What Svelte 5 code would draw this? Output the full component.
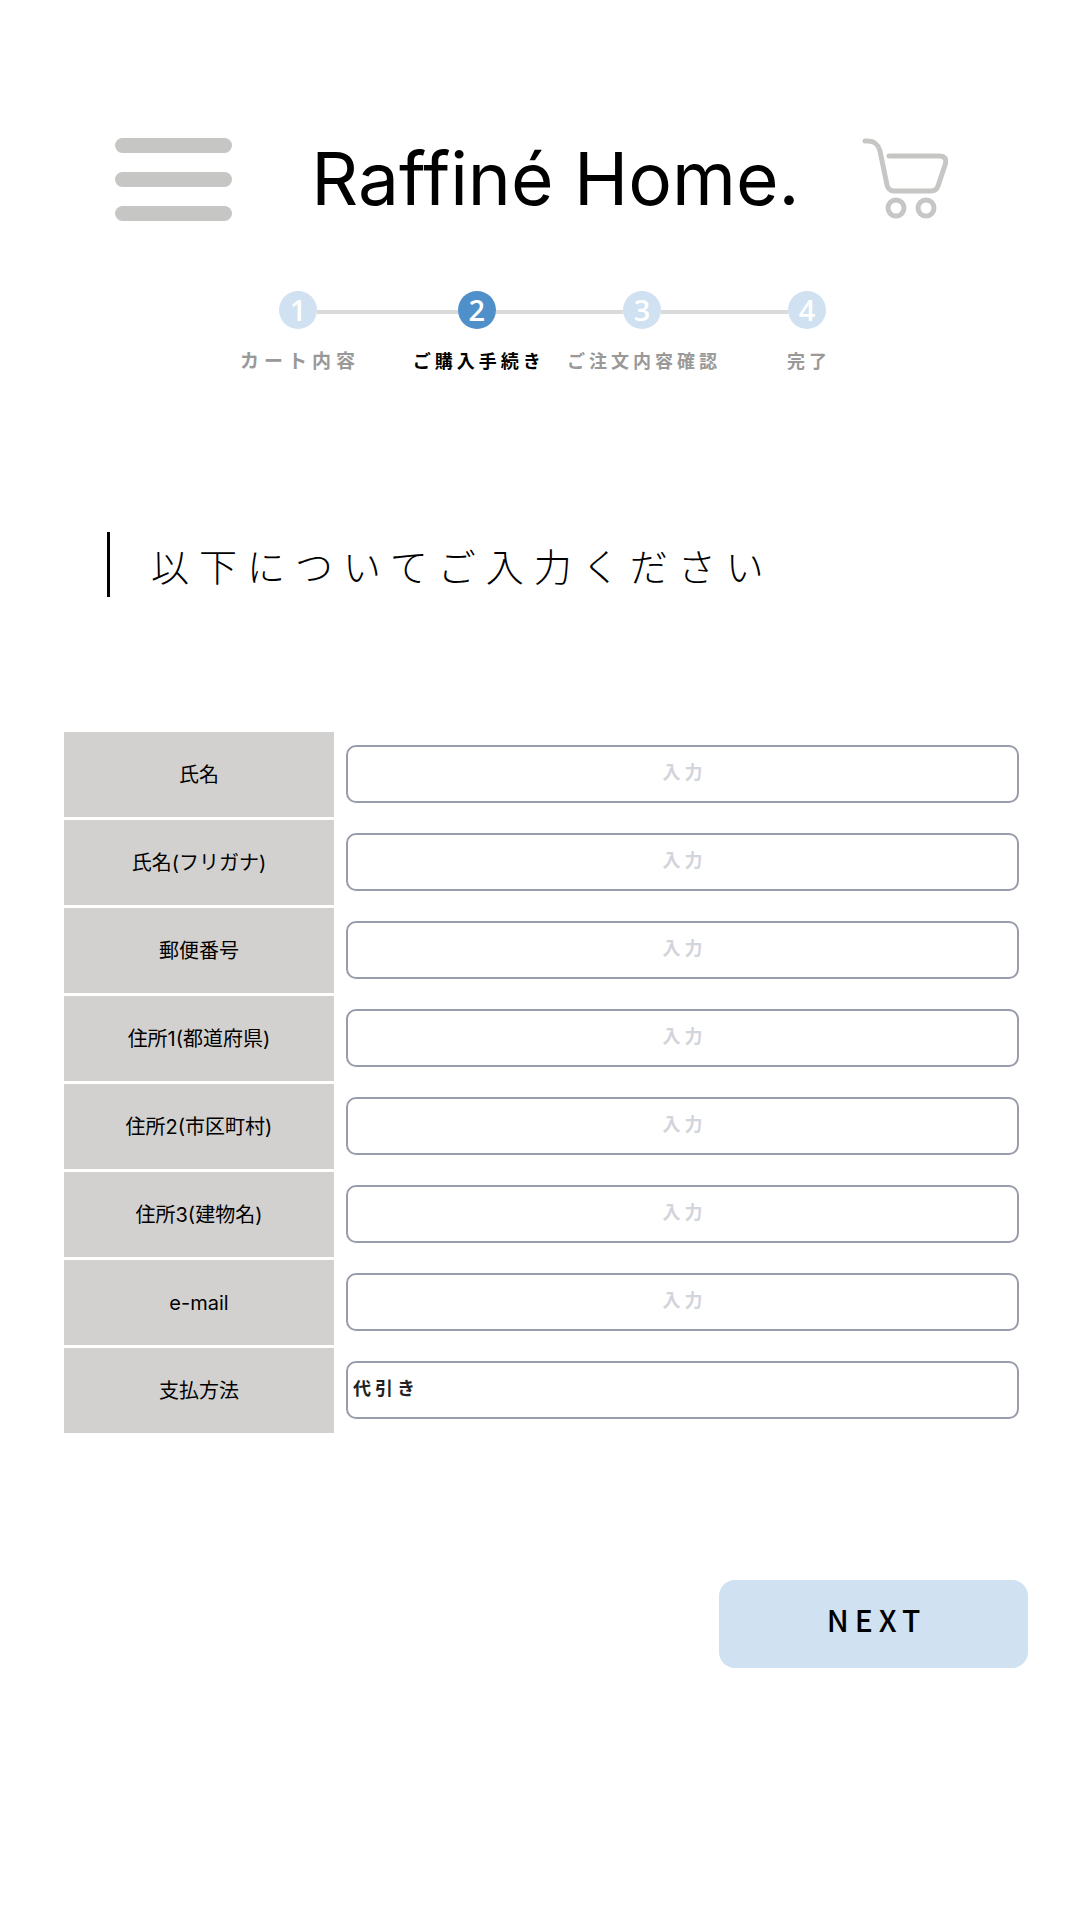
<script>
  const steps = [
    { n: 1, label: 'カート内容' },
    { n: 2, label: 'ご購入手続き' },
    { n: 3, label: 'ご注文内容確認' },
    { n: 4, label: '完了' }
  ];
  const current = 2;

  const fields = [
    { id: 'name', label: '氏名', type: 'text' },
    { id: 'kana', label: '氏名(フリガナ)', type: 'text' },
    { id: 'zip', label: '郵便番号', type: 'text' },
    { id: 'address1', label: '住所1(都道府県)', type: 'text' },
    { id: 'address2', label: '住所2(市区町村)', type: 'text' },
    { id: 'address3', label: '住所3(建物名)', type: 'text' },
    { id: 'email', label: 'e-mail', type: 'email' }
  ];
</script>

<div class="page">
  <header class="header">
    <button class="menu" type="button" aria-label="メニュー">
      <span></span>
      <span></span>
      <span></span>
    </button>
    <h1 class="brand">Raffiné Home.</h1>
    <a class="cart" href="#cart" aria-label="カート">
      <svg viewBox="0 0 86 82" fill="none" stroke="#c6c6c4" stroke-width="5" stroke-linecap="round" stroke-linejoin="round">
        <path d="M3 3H6C13 3 16 6 18 13L25 47C26 51 28 53 32 53H69C73 53 75 51 76 48L83 27C85 21 83 18 77 18H27" />
        <circle cx="34" cy="70" r="8" />
        <circle cx="64" cy="70" r="8" />
      </svg>
    </a>
  </header>

  <ol class="steps">
    {#each steps as step}
      <li
        class="step"
        class:done={step.n < current}
        class:current={step.n === current}
        aria-current={step.n === current ? 'step' : undefined}
      >
        <div class="track">
          <span class="dot">{step.n}</span>
          {#if step.n < steps.length}<span class="line"></span>{/if}
        </div>
        <div class="caption"><span>{step.label}</span></div>
      </li>
    {/each}
  </ol>

  <main>
    <h2 class="title">以下についてご入力ください</h2>

    <form onsubmit={(e) => e.preventDefault()}>
      <div class="rows">
        {#each fields as field}
          <div class="row">
            <label for={field.id}>{field.label}</label>
            <div class="field">
              <input id={field.id} name={field.id} type={field.type} placeholder="入力" />
            </div>
          </div>
        {/each}
        <div class="row">
          <label for="payment">支払方法</label>
          <div class="field">
            <select id="payment" name="payment">
              <option>代引き</option>
            </select>
          </div>
        </div>
      </div>
      <div class="actions">
        <button class="next" type="submit">NEXT</button>
      </div>
    </form>
  </main>
</div>

<style>
  :global(body) {
    background: #fff;
  }

  .page {
    box-sizing: border-box;
    padding: 137px 0 80px;
    color: #000;
    font-family: 'Noto Sans CJK JP', sans-serif;
  }

  .page :global(*) {
    box-sizing: border-box;
  }

  .header {
    display: flex;
    align-items: center;
    justify-content: space-between;
    height: 84px;
    padding: 0 132px 0 115px;
  }

  .menu {
    display: flex;
    flex-direction: column;
    gap: 19px;
    width: 117px;
    padding: 0;
    border: 0;
    background: none;
    cursor: pointer;
  }

  .menu span {
    height: 15px;
    border-radius: 8px;
    background: #c6c6c4;
  }

  .brand {
    margin: 0;
    padding-left: 17px;
    font: 400 73px/84px Inter, sans-serif;
    white-space: nowrap;
  }

  .cart {
    width: 86px;
  }

  .cart svg {
    display: block;
    width: 100%;
  }

  .steps {
    display: flex;
    margin: 0;
    padding: 70px 254px 0 279px;
    list-style: none;
  }

  .step {
    flex: 12 1 0;
    color: #999;
    font-weight: 700;
  }

  .step:first-child {
    flex-grow: 13;
  }

  .step:last-child {
    flex: none;
  }

  .track {
    display: flex;
    align-items: center;
  }

  .dot {
    width: 38px;
    height: 38px;
    border-radius: 50%;
    background: #d0e1f1;
    color: #fff;
    font: 600 29px/38px 'Open Sans', sans-serif;
    text-align: center;
  }

  .current .dot {
    background: #4f8fca;
  }

  .line {
    flex: 1;
    height: 4px;
    margin-top: 4px;
    background: #d9dada;
  }

  .caption {
    display: flex;
    justify-content: center;
    width: 38px;
    margin-top: 17px;
    font-size: 18px;
    line-height: 28px;
    letter-spacing: 4px;
    white-space: nowrap;
  }

  .caption span {
    padding-left: 4px;
  }

  .done .caption {
    font-size: 19px;
    letter-spacing: 5px;
  }

  .current .caption {
    color: #000;
  }

  .title {
    margin: 158px 107px 0;
    padding-left: 41px;
    border-left: 3px solid #000;
    font-size: 38px;
    font-weight: 300;
    line-height: 65px;
    letter-spacing: 10px;
  }

  form {
    padding: 135px 52px 0 64px;
  }

  .rows {
    display: flex;
    flex-direction: column;
    gap: 3px;
  }

  .row {
    display: grid;
    grid-template-columns: 270px 1fr;
    gap: 12px;
    min-height: 85px;
    padding-right: 9px;
  }

  label {
    display: flex;
    align-items: center;
    justify-content: center;
    background: #d2d1cf;
    font: 400 20px/28px Inter, 'Noto Sans CJK JP', sans-serif;
  }

  .field {
    padding-top: 13px;
  }

  input,
  select {
    display: block;
    width: 100%;
    height: 58px;
    margin: 0;
    padding: 0 5px 7px;
    border: 2px solid #999dab;
    border-radius: 10px;
    background: #fff;
    color: #222;
    font: 700 18px/28px 'Noto Sans CJK JP', sans-serif;
    letter-spacing: 4px;
    appearance: none;
  }

  input {
    padding-left: 9px;
    text-align: center;
  }

  input::placeholder {
    color: #d1d4da;
    opacity: 1;
  }

  .actions {
    display: flex;
    justify-content: flex-end;
    margin-top: 147px;
  }

  .next {
    width: 309px;
    height: 88px;
    padding: 0 0 10px 6px;
    border: 0;
    border-radius: 16px;
    background: #d0e1f1;
    color: #000;
    font: 500 30px/44px 'Noto Sans CJK JP', sans-serif;
    letter-spacing: 6px;
    cursor: pointer;
  }
</style>
